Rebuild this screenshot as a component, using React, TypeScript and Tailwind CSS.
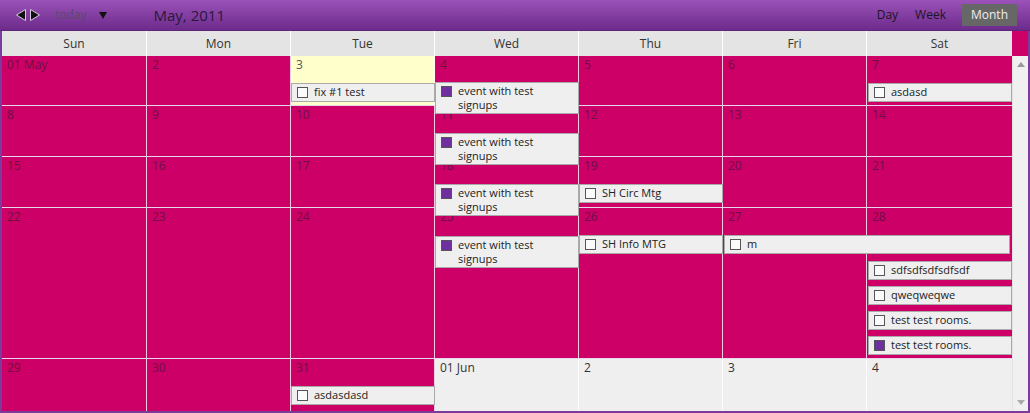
import React from 'react'

type CellKind = 'month' | 'today' | 'other'

interface DayCell {
  label: string
  kind: CellKind
}

interface CalEvent {
  title: string
  left: number
  top: number
  width: number
  filled?: boolean
}

const dayNames = ['Sun', 'Mon', 'Tue', 'Wed', 'Thu', 'Fri', 'Sat']

const rowHeights = ['h-[50px]', 'h-[51px]', 'h-[51px]', 'h-[151px]', 'h-[52px]']

const weeks: DayCell[][] = [
  [
    { label: '01 May', kind: 'month' },
    { label: '2', kind: 'month' },
    { label: '3', kind: 'today' },
    { label: '4', kind: 'month' },
    { label: '5', kind: 'month' },
    { label: '6', kind: 'month' },
    { label: '7', kind: 'month' },
  ],
  ['8', '9', '10', '11', '12', '13', '14'].map((d) => ({ label: d, kind: 'month' as CellKind })),
  ['15', '16', '17', '18', '19', '20', '21'].map((d) => ({ label: d, kind: 'month' as CellKind })),
  ['22', '23', '24', '25', '26', '27', '28'].map((d) => ({ label: d, kind: 'month' as CellKind })),
  [
    { label: '29', kind: 'month' },
    { label: '30', kind: 'month' },
    { label: '31', kind: 'month' },
    { label: '01 Jun', kind: 'other' },
    { label: '2', kind: 'other' },
    { label: '3', kind: 'other' },
    { label: '4', kind: 'other' },
  ],
]

// positions are relative to the top-left of the month body
const events: CalEvent[] = [
  { title: 'fix #1 test', left: 289, top: 27, width: 144 },
  { title: 'event with test\nsignups', left: 433, top: 26, width: 144, filled: true },
  { title: 'asdasd', left: 866, top: 27, width: 144 },
  { title: 'event with test\nsignups', left: 433, top: 77, width: 144, filled: true },
  { title: 'event with test\nsignups', left: 433, top: 128, width: 144, filled: true },
  { title: 'SH Circ Mtg', left: 577, top: 128, width: 144 },
  { title: 'event with test\nsignups', left: 433, top: 180, width: 144, filled: true },
  { title: 'SH Info MTG', left: 577, top: 179, width: 144 },
  { title: 'm', left: 722, top: 179, width: 286 },
  { title: 'sdfsdfsdfsdfsdf', left: 866, top: 205, width: 144 },
  { title: 'qweqweqwe', left: 866, top: 230, width: 144 },
  { title: 'test test rooms.', left: 866, top: 255, width: 144 },
  { title: 'test test rooms.', left: 866, top: 280, width: 144, filled: true },
  { title: 'asdasdasd', left: 289, top: 330, width: 144 },
]

const cols = 'grid grid-cols-[145px_144px_144px_144px_144px_144px_145px]'

function cellClass(kind: CellKind) {
  if (kind === 'today') return 'bg-[#ffffcc] text-[#555]'
  if (kind === 'other') return 'bg-[#efefef] text-[#333]'
  return 'bg-[#cc0066] text-[#6c1241]'
}

function EventBox({ ev }: { ev: CalEvent }) {
  const twoLines = ev.title.includes('\n')
  return (
    <div
      className={`absolute flex items-start gap-[6px] border border-[#a9a9a9] bg-[#efefef] pl-[5px] pt-[1px] text-[11px] text-[#222] ${
        twoLines ? 'h-[32px] leading-[14px]' : 'h-[19px] leading-[14px]'
      }`}
      style={{ left: ev.left, top: ev.top, width: ev.width }}
    >
      <span
        className={`mt-[2px] h-[11px] w-[11px] shrink-0 border border-[#555] ${
          ev.filled ? 'bg-[#6f2f9f]' : 'bg-[#fbfbfb]'
        }`}
      />
      <span className="whitespace-pre-line">{ev.title}</span>
    </div>
  )
}

export default function App() {
  return (
    <div className="flex h-[413px] w-[1030px] flex-col bg-[#7b3a9c] font-['Open_Sans',sans-serif]">
      {/* toolbar */}
      <div className="flex h-[31px] shrink-0 items-center border-b border-[#5e2578] bg-gradient-to-b from-[#9b52b9] to-[#6c2b8b] pl-[16px] pr-[13px]">
        <div className="flex items-center gap-[4px]">
          <svg width="10" height="12" viewBox="0 0 10 12">
            <polygon points="9.5,0.5 9.5,11.5 0.5,6" fill="#111" stroke="#d8c8e0" strokeWidth="1" />
          </svg>
          <svg width="10" height="12" viewBox="0 0 10 12">
            <polygon points="0.5,0.5 0.5,11.5 9.5,6" fill="#111" stroke="#d8c8e0" strokeWidth="1" />
          </svg>
        </div>
        <span className="ml-[15px] text-[12px] text-[#5a4a6c]">today</span>
        <svg className="ml-[12px]" width="8" height="7" viewBox="0 0 8 7">
          <polygon points="0,0 8,0 4,7" fill="#111" />
        </svg>
        <span className="ml-[47px] text-[15px] text-[#2b173a]">May, 2011</span>
        <div className="ml-auto flex items-center text-[12px] text-[#1d1426]">
          <span className="px-[5px]">Day</span>
          <span className="ml-[7px] px-[5px]">Week</span>
          <span className="ml-[11px] bg-[#676767] px-[9px] py-[2px] text-[#eee]">Month</span>
        </div>
      </div>

      <div className="mx-[2px] flex flex-col">
        {/* weekday header */}
        <div className="flex h-[25px]">
          <div className={cols}>
            {dayNames.map((d, i) => (
              <div
                key={d}
                className={`flex items-center justify-center bg-[#e4e4e4] text-[12px] text-[#333] ${
                  i < 6 ? 'border-r border-white' : ''
                }`}
              >
                {d}
              </div>
            ))}
          </div>
          <div className="w-[16px] bg-[#cc0066]" />
        </div>

        {/* month body */}
        <div className="flex h-[355px]">
          <div className="relative w-[1010px]">
            {weeks.map((week, w) => (
              <div key={w} className={`${cols} ${rowHeights[w]} ${w < 4 ? 'border-b border-white/80' : ''}`}>
                {week.map((day, i) => (
                  <div
                    key={i}
                    className={`pl-[5px] text-[12px] ${cellClass(day.kind)} ${
                      i < 6 ? 'border-r border-white/80' : ''
                    }`}
                  >
                    {day.label}
                  </div>
                ))}
              </div>
            ))}
            {events.map((ev, i) => (
              <EventBox key={i} ev={ev} />
            ))}
          </div>
          {/* scrollbar */}
          <div className="flex w-[16px] flex-col items-center justify-between border-l border-[#e2e2e2] bg-[#f0f0f0] py-[6px]">
            <svg width="8" height="5" viewBox="0 0 8 5">
              <polygon points="0,5 8,5 4,0" fill="#999" />
            </svg>
            <svg width="8" height="5" viewBox="0 0 8 5">
              <polygon points="0,0 8,0 4,5" fill="#aaa" />
            </svg>
          </div>
        </div>
      </div>
    </div>
  )
}
